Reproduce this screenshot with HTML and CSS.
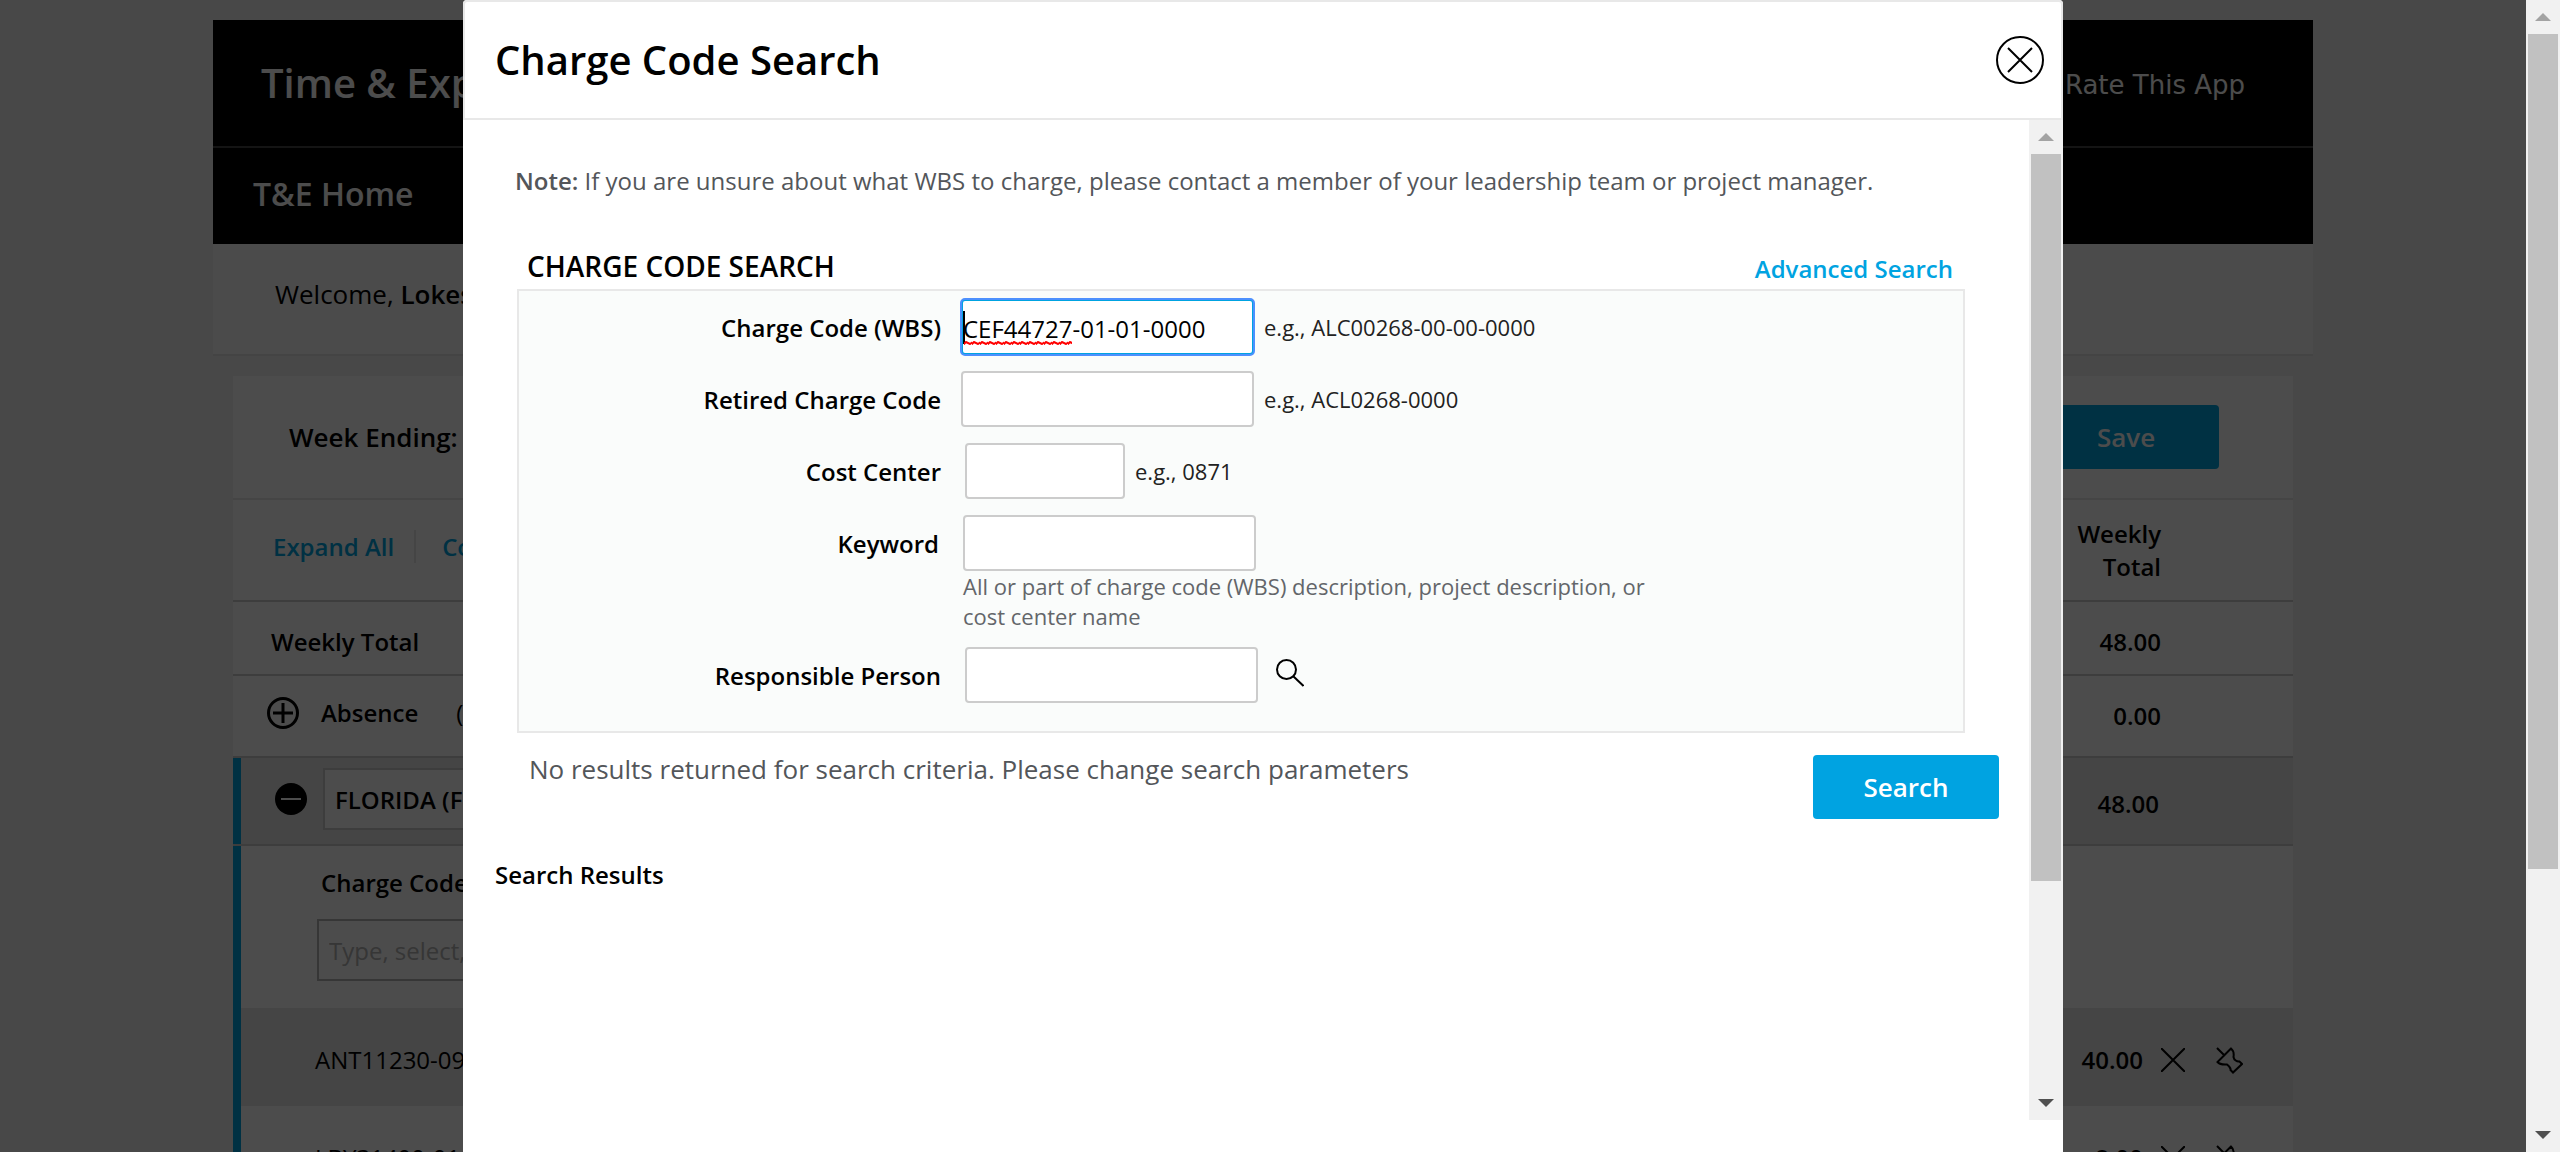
FILE: index.html
```html
<!DOCTYPE html>
<html lang="en">
<head>
<meta charset="utf-8">
<title>Time &amp; Expense - Charge Code Search</title>
<link rel="stylesheet" href="styles.css">
</head>
<body>
<div class="window">
  <div class="viewport">
    <main class="page">
      <header class="masthead">
        <div class="masthead-top">
          <h1 class="app-title">Time &amp; Expense</h1>
          <a class="rate-link" href="#rate">Rate This App</a>
        </div>
        <nav class="masthead-nav"><a class="nav-link" href="#home">T&amp;E Home</a></nav>
      </header>
      <p class="welcome">Welcome, <strong class="welcome-name">Lokesh</strong></p>

      <section class="sheet">
        <div class="week-bar">
          <h2 class="week-title">Week Ending:</h2>
          <button class="button" type="button">Save</button>
        </div>
        <table class="time-table">
          <thead>
            <tr class="row-head">
              <td><span class="toggle-links"><a class="link" href="#expand">Expand All</a><a class="link link-next" href="#collapse">Collapse All</a></span></td>
              <th class="amount" scope="col">Weekly<br>Total</th>
            </tr>
          </thead>
          <tbody>
            <tr class="row-total">
              <th scope="row">Weekly Total</th>
              <td class="amount">48.00</td>
            </tr>
            <tr class="row-absence">
              <th scope="row">
                <span class="absence">
                  <button class="icon-button" type="button" aria-label="Expand Absence"><svg width="32" height="32" viewBox="0 0 32 32" fill="none" stroke="#000" stroke-width="3"><circle cx="16" cy="16" r="14.500"/><path d="M16 6v20M6 16h20"/></svg></button>
                  <span class="absence-name">Absence</span><span class="absence-hours">(8.00)</span>
                </span>
              </th>
              <td class="amount">0.00</td>
            </tr>
          </tbody>
          <tbody class="project">
            <tr class="row-project">
              <td>
                <span class="project-head">
                  <button class="icon-button" type="button" aria-label="Collapse Florida"><svg width="32" height="32" viewBox="0 0 32 32"><circle cx="16" cy="16" r="16" fill="#000"/><path d="M6 16h20" stroke="#fff" stroke-width="2"/></svg></button>
                  <input class="box project-box" type="text" value="FLORIDA (FL)" aria-label="Location">
                </span>
              </td>
              <td class="amount">48.00</td>
            </tr>
            <tr class="row-entry">
              <td colspan="2">
                <label class="entry-label" for="entry">Charge Code</label>
                <input class="box entry-box" id="entry" type="text" placeholder="Type, select, or search">
              </td>
            </tr>
            <tr class="row-code row-shaded">
              <td>ANT11230-09-01-01-1000</td>
              <td>
                <span class="code-tools">
                  <span class="code-hours">40.00</span>
                  <button class="icon-button" type="button" aria-label="Remove"><svg width="24" height="24" viewBox="0 0 24 24" fill="none" stroke="#000" stroke-width="2"><path d="M0 0l24 24M24 0L0 24"/></svg></button>
                  <button class="icon-button pin" type="button" aria-label="Pin"><svg width="27" height="27" viewBox="0 0 27 27" fill="none" stroke="#000" stroke-width="2"><path d="M1 1l8 8M15 1.500L1.500 15C4 18 7 17.500 11 17.500C13 19 15 21 14.500 23L17 25.500L26 17L23.500 14.500C21 15 18 13 17.500 10C18 7 18 4 15 1.500z"/></svg></button>
                </span>
              </td>
            </tr>
            <tr class="row-code">
              <td>LBY31400-01-01-01-1000</td>
              <td>
                <span class="code-tools">
                  <span class="code-hours">8.00</span>
                  <button class="icon-button" type="button" aria-label="Remove"><svg width="24" height="24" viewBox="0 0 24 24" fill="none" stroke="#000" stroke-width="2"><path d="M0 0l24 24M24 0L0 24"/></svg></button>
                  <button class="icon-button pin" type="button" aria-label="Pin"><svg width="27" height="27" viewBox="0 0 27 27" fill="none" stroke="#000" stroke-width="2"><path d="M1 1l8 8M15 1.500L1.500 15C4 18 7 17.500 11 17.500C13 19 15 21 14.500 23L17 25.500L26 17L23.500 14.500C21 15 18 13 17.500 10C18 7 18 4 15 1.500z"/></svg></button>
                </span>
              </td>
            </tr>
          </tbody>
        </table>
      </section>
    </main>

    <div class="backdrop">
      <div class="modal" role="dialog" aria-labelledby="modal-title">
        <header class="modal-head">
          <h2 class="modal-title" id="modal-title">Charge Code Search</h2>
          <button class="icon-button" type="button" aria-label="Close"><svg width="48" height="48" viewBox="0 0 48 48" fill="none" stroke="#000" stroke-width="2"><circle cx="24" cy="24" r="23"/><path d="M12 12l24 24M36 12L12 36"/></svg></button>
        </header>
        <div class="modal-body">
          <div class="modal-content">
            <p class="note"><strong class="note-lead">Note:</strong> If you are unsure about what WBS to charge, please contact a member of your leadership team or project manager.</p>
            <form>
              <div class="form-head">
                <h3 class="form-title">CHARGE CODE SEARCH</h3>
                <a class="link" href="#advanced">Advanced Search</a>
              </div>
              <div class="panel">
                <div class="field">
                  <label class="field-label" for="wbs">Charge Code (WBS)</label>
                  <div class="field-line">
                    <span class="spelled">
                      <input class="text-box text-box-active" id="wbs" type="text" value="CEF44727-01-01-0000" spellcheck="false">
                      <span class="caret"></span>
                      <svg class="squiggle" width="108" height="4"><defs><pattern id="wave" width="8" height="4" patternUnits="userSpaceOnUse"><path d="M-1 4L2 1L6 3L9 1" fill="none" stroke="#f00" stroke-width="2"/></pattern></defs><rect width="108" height="4" fill="url(#wave)"/></svg>
                    </span>
                    <span class="example">e.g., ALC00268-00-00-0000</span>
                  </div>
                </div>
                <div class="field">
                  <label class="field-label" for="retired">Retired Charge Code</label>
                  <div class="field-line"><input class="text-box" id="retired" type="text"><span class="example">e.g., ACL0268-0000</span></div>
                </div>
                <div class="field field-inset">
                  <label class="field-label" for="cost">Cost Center</label>
                  <div class="field-line"><input class="text-box text-box-short" id="cost" type="text"><span class="example">e.g., 0871</span></div>
                </div>
                <div class="field field-keyword">
                  <label class="field-label" for="keyword">Keyword</label>
                  <div>
                    <div class="field-line"><input class="text-box" id="keyword" type="text"></div>
                    <p class="help">All or part of charge code (WBS) description, project description, or cost center name</p>
                  </div>
                </div>
                <div class="field field-inset">
                  <label class="field-label" for="person">Responsible Person</label>
                  <div class="field-line"><input class="text-box" id="person" type="text"><button class="icon-button find" type="button" aria-label="Find person"><svg width="28" height="28" viewBox="0 0 28 28" fill="none" stroke="#000" stroke-width="2"><circle cx="10.500" cy="10.500" r="9.500"/><path d="M17 17l10.500 10"/></svg></button></div>
                </div>
              </div>
              <div class="form-foot">
                <p class="message">No results returned for search criteria. Please change search parameters</p>
                <button class="button" type="submit">Search</button>
              </div>
            </form>
            <h3 class="results-title">Search Results</h3>
          </div>
          <div class="scrollbar" aria-hidden="true">
            <span class="arrow arrow-up"></span>
            <span class="track"><span class="thumb thumb-modal"></span></span>
            <span class="arrow arrow-down"></span>
          </div>
        </div>
      </div>
    </div>
  </div>
  <div class="scrollbar" aria-hidden="true">
    <span class="arrow arrow-up"></span>
    <span class="track"><span class="thumb thumb-page"></span></span>
    <span class="arrow arrow-down"></span>
  </div>
</div>
</body>
</html>
```
FILE: styles.css
```css
* { box-sizing: border-box; }

body {
  margin: 0;
  font-family: "Open Sans", "Noto Sans", sans-serif;
  font-size: 24px;
  line-height: 32px;
  color: #000;
}

h1, h2, h3, p { margin: 0; font-weight: 600; }
a { color: inherit; text-decoration: none; }
input, button { font: inherit; color: inherit; }
svg { display: block; }

.window { display: flex; height: 100vh; }
.viewport { position: relative; flex: 1; overflow: hidden; background: #f2f2f2; }

/* Page */
.page { max-width: 2100px; margin: 0 auto; padding-top: 20px; }
.masthead { background: #000; color: #fff; }
.masthead-top {
  display: flex; align-items: center; justify-content: space-between;
  height: 128px; padding: 0 68px 0 48px; border-bottom: 2px solid #444;
}
.app-title { font-size: 40px; line-height: 54px; }
.rate-link { padding-top: 4px; font-family: "DejaVu Sans", sans-serif; font-size: 26px; }
.masthead-nav { display: flex; align-items: center; height: 96px; padding: 0 40px 4px; }
.nav-link { font-size: 32px; font-weight: 600; }
.welcome {
  height: 112px; padding: 32px 62px 0; background: #fafafa;
  border-bottom: 2px solid #e4e4e4; font-size: 26px; line-height: 36px; font-weight: 400;
}
.welcome-name { font-weight: 600; }

.sheet { margin: 20px 20px 0; background: #fff; }
.week-bar {
  display: flex; align-items: center; justify-content: space-between;
  height: 124px; padding: 0 74px 0 56px; border-bottom: 2px solid #e8e8e8;
}
.week-title { font-size: 26px; }

.button {
  width: 186px; height: 64px; padding: 0; border: 0; border-radius: 4px;
  background: #00a3e1; color: #fff; font-size: 26px; font-weight: 600;
}
.icon-button { flex: none; padding: 0; border: 0; background: none; }
.link { color: #00a3e1; font-weight: 600; }

.time-table { width: 100%; border-collapse: separate; border-spacing: 0; }
.time-table td, .time-table th { padding: 0; border-bottom: 2px solid #ccc; text-align: left; }
.time-table th { font-weight: 600; }
.time-table .amount { padding-right: 132px; text-align: right; font-weight: 600; }

.row-head { height: 102px; line-height: 33px; }
.row-total { height: 74px; }
.row-absence { height: 82px; }
.row-project { height: 88px; background: #e6e6e6; }
.row-entry { height: 162px; }
.row-code { height: 98px; }
.row-shaded { background: #e6e6e6; }

.toggle-links { display: flex; padding: 0 0 8px 40px; }
.link-next { margin-left: 20px; padding-left: 26px; border-left: 2px solid #e8e8e8; }
.time-table .row-total th { padding: 8px 0 0 38px; }
.time-table .row-total .amount { padding-top: 8px; }
.absence { display: flex; align-items: center; padding: 0 0 6px 34px; }
.absence-name { margin-left: 22px; }
.absence-hours { margin-left: 38px; font-weight: 400; }

.project td:first-child { box-shadow: inset 8px 0 #00a3e1; }
.project-head { display: flex; align-items: center; gap: 16px; padding: 0 0 4px 42px; }
.time-table .row-project .amount { padding: 6px 134px 0 0; }
.box { width: 700px; height: 62px; border: 2px solid #ccc; background: #fff; padding: 0 10px; }
.box::placeholder { color: #b4b4b4; opacity: 1; }
.project-box { font-weight: 600; }
.time-table .row-entry td { padding-left: 84px; border: 0; }
.entry-label { display: block; margin: 0 4px 20px; font-weight: 600; }
.entry-box { display: block; margin-bottom: 6px; border-color: #b4b4b4; }
.time-table .row-code td { padding-top: 6px; border: 0; }
.time-table .row-code td:first-child { padding-left: 82px; }
.code-tools { display: flex; align-items: center; justify-content: flex-end; padding-right: 50px; }
.code-hours { margin-right: 18px; font-weight: 600; }
.pin { margin-left: 31px; }

/* Dialog */
.backdrop {
  position: absolute; inset: 0; display: flex; justify-content: center; align-items: flex-start;
  background: rgba(0, 0, 0, .7);
}
.modal { flex: 0 1 1600px; min-height: 100%; background: #fff; border-radius: 4px 4px 0 0; }
.modal-head {
  display: flex; align-items: center; justify-content: space-between;
  height: 120px; padding: 0 17px 0 30px; border: 2px solid #e8e8e8; border-radius: 4px 4px 0 0;
}
.modal-title { font-size: 40px; line-height: 54px; }
.modal-body { display: flex; height: calc(100vh - 152px); }
.modal-content { flex: 1; padding-top: 45px; overflow: hidden; }

.note { margin: 0 52px 50px; color: #53565a; font-weight: 400; }
.note-lead { font-weight: 600; }
.form-head {
  display: flex; align-items: flex-end; justify-content: space-between;
  margin: 0 76px 4px 64px;
}
.form-title { font-size: 28px; line-height: 38px; }
.panel {
  display: flex; flex-direction: column; gap: 16px; margin: 0 64px 0 54px;
  padding: 8px 0 28px; border: 2px solid #e8e8e8; background: #fafcfb;
}
.field { display: grid; grid-template-columns: 422px 1fr; column-gap: 20px; }
.field-inset { column-gap: 24px; }
.field-keyword { grid-template-columns: 420px 1fr; column-gap: 24px; }
.field-label { height: 56px; line-height: 58px; text-align: right; font-weight: 600; }
.field-line { display: flex; align-items: center; }
.text-box {
  width: 293px; height: 56px; padding: 2px 0 0; border: 2px solid #ccc;
  border-radius: 4px; background: #fff;
}
.text-box-active { display: block; border-color: #00a3e1; outline: 2px solid #4d90fe; outline-offset: -1px; }
.text-box-short { width: 160px; }
.example { margin-left: 10px; font-size: 22px; color: #222; }
.help { max-width: 700px; font-size: 22px; line-height: 30px; font-weight: 400; color: #63666a; }
.find { margin: 0 0 4px 18px; }

.spelled { position: relative; }
.caret { position: absolute; left: 2px; top: 12px; width: 2px; height: 33px; background: #000; }
.squiggle { position: absolute; left: 3px; top: 42px; }

.form-foot {
  display: flex; align-items: flex-start; justify-content: space-between;
  margin: 22px 30px 0 66px;
}
.message { margin-top: -2px; font-size: 26px; font-weight: 400; color: #53565a; }
.results-title { margin: 40px 32px 0; font-size: 24px; }

/* Scroll bars */
.scrollbar { flex: none; display: flex; flex-direction: column; width: 34px; background: #f1f1f1; }
.arrow { display: flex; align-items: center; justify-content: center; height: 34px; }
.arrow::before { content: ""; width: 16px; height: 8px; }
.arrow-up::before { background: #a3a3a3; clip-path: polygon(50% 0, 100% 100%, 0 100%); }
.arrow-down::before { background: #505050; clip-path: polygon(0 0, 100% 0, 50% 100%); }
.track { flex: 1; padding: 0 2px; }
.thumb { display: block; background: #c1c1c1; }
.thumb-page { height: 77%; }
.thumb-modal { height: 78%; }
```
